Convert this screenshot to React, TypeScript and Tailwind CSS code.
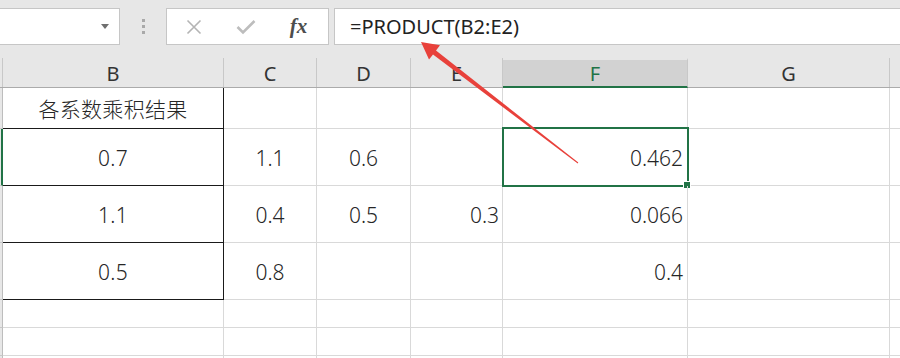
import React from "react";

const GRID = "border-[#d9d9d9]";

const cols = [
  { key: "L", w: "w-[3px]" },
  { key: "B", w: "w-[221px]" },
  { key: "C", w: "w-[93px]" },
  { key: "D", w: "w-[94px]" },
  { key: "E", w: "w-[92px]" },
  { key: "F", w: "w-[185px]" },
  { key: "G", w: "w-[202px]" },
  { key: "H", w: "w-[20px]" },
];

type Row = {
  h: string;
  B?: string;
  C?: string;
  D?: string;
  E?: string;
  F?: string;
  black?: boolean;
  selected?: boolean;
};

const rows: Row[] = [
  { h: "h-[41px]", B: "各系数乘积结果", black: true },
  { h: "h-[57px]", B: "0.7", C: "1.1", D: "0.6", F: "0.462", black: true, selected: true },
  { h: "h-[57px]", B: "1.1", C: "0.4", D: "0.5", E: "0.3", F: "0.066", black: true },
  { h: "h-[57px]", B: "0.5", C: "0.8", F: "0.4", black: true },
  { h: "h-[28px]" },
  { h: "h-[28px]" },
  { h: "h-[28px]" },
];

const CELL = "text-[21px] text-[#262626] font-light pt-[3px]";

function Toolbar() {
  return (
    <div className="h-[58px] bg-[#e7e7e7] flex items-start pt-[8px] shrink-0">
      <div className="w-[120px] h-[37px] bg-white border border-l-0 border-[#c6c6c6] flex items-center justify-end pr-[10px]">
        <svg width="8" height="5" viewBox="0 0 8 5">
          <polygon points="0,0 8,0 4,5" fill="#6f6f6f" />
        </svg>
      </div>
      <div className="w-[46px] h-[37px] flex items-center justify-center">
        <div className="flex flex-col gap-[3px]">
          <div className="w-[3px] h-[3px] bg-[#a9a9a9]" />
          <div className="w-[3px] h-[3px] bg-[#a9a9a9]" />
          <div className="w-[3px] h-[3px] bg-[#a9a9a9]" />
        </div>
      </div>
      <div className="w-[163px] h-[37px] bg-white border border-[#c6c6c6] flex items-center">
        <div className="w-[54px] flex justify-center">
          <svg width="16" height="16" viewBox="0 0 16 16">
            <path d="M1.5 1.5 L14.5 14.5 M14.5 1.5 L1.5 14.5" stroke="#b4b4b4" strokeWidth="1.6" fill="none" />
          </svg>
        </div>
        <div className="w-[50px] flex justify-center">
          <svg width="20" height="16" viewBox="0 0 20 16">
            <path d="M1.5 8 L7 13.5 L18.5 2" stroke="#bdbdbd" strokeWidth="2.6" fill="none" />
          </svg>
        </div>
        <div className="w-[55px] flex justify-center">
          <span className="text-[#4d4d4d] text-[21px] italic font-bold leading-none" style={{ fontFamily: '"Liberation Serif", serif' }}>
            fx
          </span>
        </div>
      </div>
      <div className="ml-[5px] flex-1 h-[37px] bg-white border border-r-0 border-[#c6c6c6] flex items-center pl-[15px]">
        <span className="text-[20px] text-[#222] leading-none">=PRODUCT(B2:E2)</span>
      </div>
    </div>
  );
}

function Header() {
  return (
    <div className="flex h-[30px] bg-[#e7e7e7] border-b border-[#ababab] shrink-0">
      {cols.map((c) => {
        if (c.key === "L")
          return <div key={c.key} className={`${c.w} shrink-0 border-r border-[#c8c8c8]`} />;
        if (c.key === "F")
          return (
            <div
              key={c.key}
              className={`${c.w} shrink-0 border-t-[2px] border-t-[#e7e7e7] bg-[#d2d2d2] border-b-[2px] border-b-[#217346] border-r border-r-[#c8c8c8] flex items-center justify-center text-[20px] text-[#217346] pt-[2px] -mb-[1px]`}
            >
              F
            </div>
          );
        return (
          <div
            key={c.key}
            className={`${c.w} shrink-0 border-r border-[#c8c8c8] flex items-center justify-center text-[20px] text-[#333] pt-[2px]`}
          >
            {c.key === "H" ? "" : c.key}
          </div>
        );
      })}
    </div>
  );
}

function DataRow({ r }: { r: Row }) {
  return (
    <div className={`flex ${r.h} shrink-0`}>
      <div
        className={`w-[3px] shrink-0 bg-[#e7e7e7] border-b border-[#c8c8c8] ${
          r.selected ? "border-r-[2px] border-r-[#217346]" : "border-r border-r-[#bdbdbd]"
        }`}
      />
      <div
        className={`w-[221px] shrink-0 border-r border-b ${
          r.black ? "border-[#1a1a1a]" : GRID
        } flex items-center justify-center ${CELL} tracking-[0.3px]`}
      >
        {r.B}
      </div>
      <div className={`w-[93px] shrink-0 border-r border-b ${GRID} flex items-center justify-center ${CELL}`}>
        {r.C}
      </div>
      <div className={`w-[94px] shrink-0 border-r border-b ${GRID} flex items-center justify-center ${CELL}`}>
        {r.D}
      </div>
      <div className={`w-[92px] shrink-0 border-r border-b ${GRID} flex items-center justify-end pr-[3px] ${CELL}`}>
        {r.E}
      </div>
      <div className={`relative w-[185px] shrink-0 border-r border-b ${GRID} flex items-center justify-end pr-[4px] ${CELL}`}>
        {r.F}
        {r.selected && (
          <>
            <div className="absolute left-[-1px] top-[-2px] right-[-2px] bottom-[-2px] border-[2px] border-[#217346]" />
            <div className="absolute right-[-4px] bottom-[-4px] w-[6px] h-[6px] bg-[#217346] border border-white box-content" />
          </>
        )}
      </div>
      <div className={`w-[202px] shrink-0 border-r border-b ${GRID}`} />
      <div className={`w-[20px] shrink-0 border-b ${GRID}`} />
    </div>
  );
}

export default function App() {
  return (
    <div
      className="relative w-[900px] h-[358px] overflow-hidden bg-white flex flex-col"
      style={{ fontFamily: '"Noto Sans", "Noto Sans CJK SC", sans-serif' }}
    >
      <Toolbar />
      <Header />
      {rows.map((r, i) => (
        <DataRow key={i} r={r} />
      ))}
      <svg className="absolute inset-0 pointer-events-none" width="900" height="358" viewBox="0 0 900 358">
        <polygon
          points="421,42 440,45.3 436,50.4 578.3,162.6 577.7,163.4 433,54.4 429,59.5"
          fill="#e8413b"
        />
      </svg>
    </div>
  );
}
